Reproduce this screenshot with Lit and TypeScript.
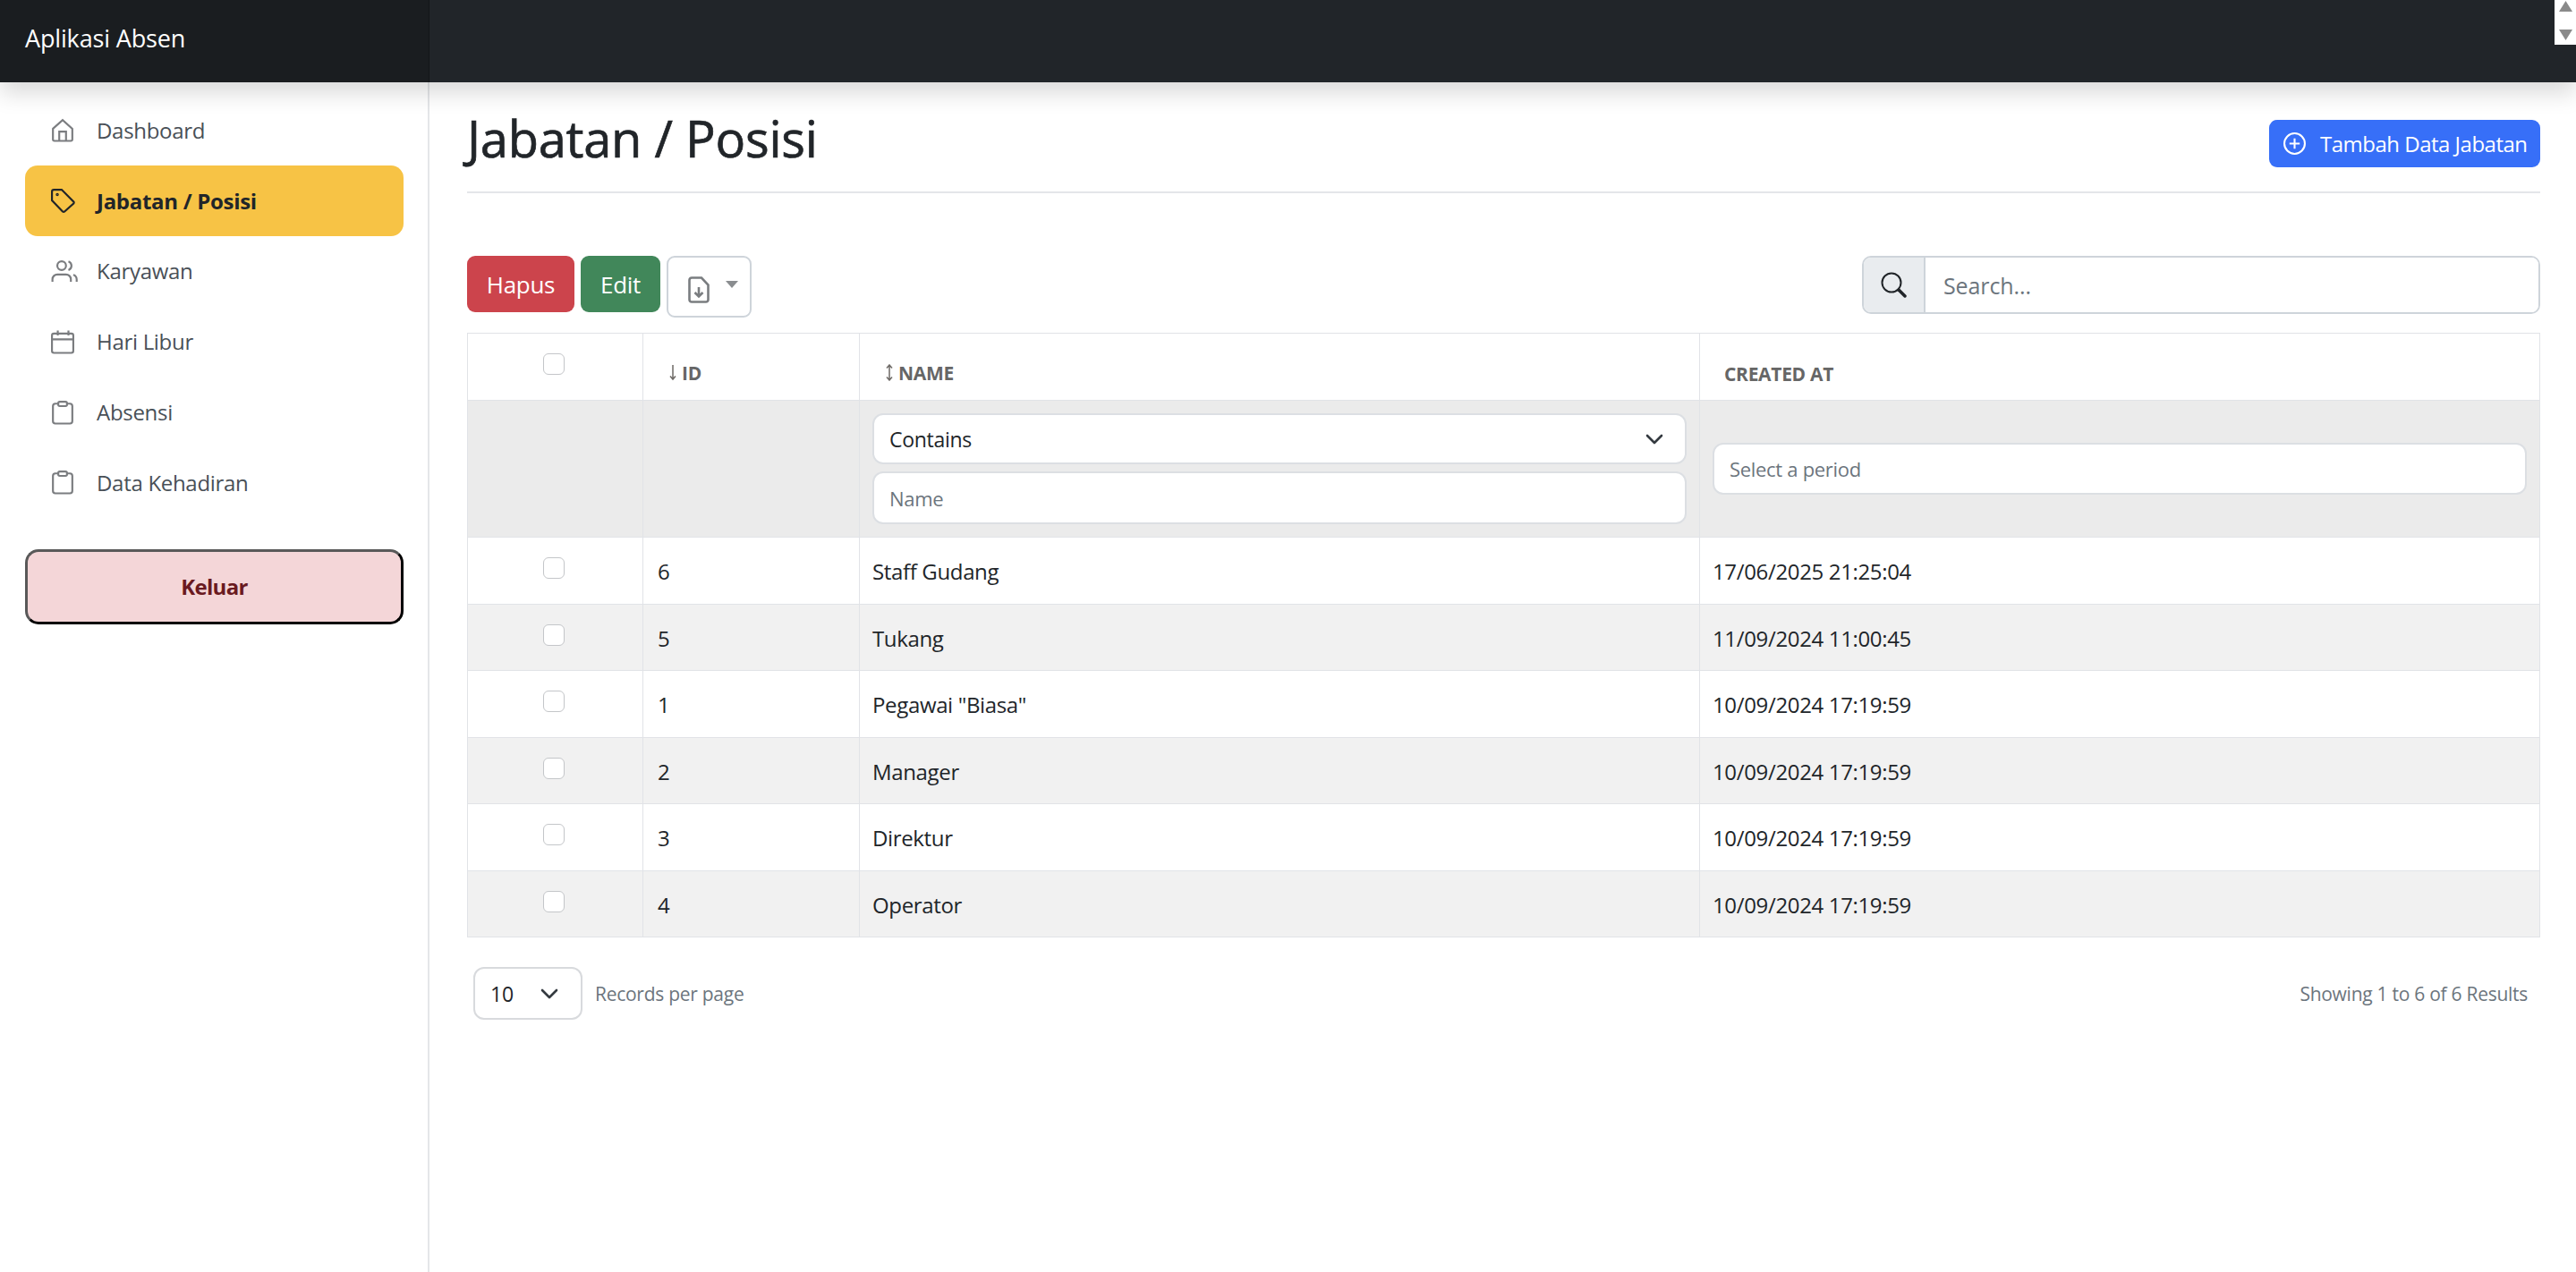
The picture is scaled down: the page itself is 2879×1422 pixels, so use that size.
import {html, css, svg, LitElement} from 'lit';
import {customElement} from 'lit/decorators.js';

const icons: Record<string, unknown> = {
  house: svg`<path d="M2 11 12 2l10 9v11a1.5 1.5 0 0 1-1.5 1.5h-17A1.5 1.5 0 0 1 2 22z"/><path d="M8.5 23.5V14h7v9.5"/>`,
  tag: svg`<path d="M1 3a2 2 0 0 1 2-2h8l12.5 12.5a1.5 1.5 0 0 1 0 1.5l-9.5 8.5a1.5 1.5 0 0 1-2 0L1 12z"/><circle cx="6.5" cy="6" r=".6"/>`,
  people: svg`<circle cx="11" cy="6.5" r="4.5"/><path d="M1.5 23v-2.5a5 5 0 0 1 5-5h9a5 5 0 0 1 5 5V23"/><path d="M18 2a4.8 4.8 0 0 1 0 9"/><path d="M23 16a5 5 0 0 1 3.5 4.5V23"/>`,
  calendar: svg`<rect x="1" y="3.5" width="22" height="20" rx="2"/><path d="M1 9.5h22M7 .5v5M18 .5v5"/>`,
  clipboard: svg`<rect x="2" y="3" width="20" height="20.5" rx="2.5"/><rect x="7.5" y="1" width="9" height="4.5" rx="1.5" fill="#fff"/>`,
};

const navItems = [
  {label: 'Dashboard', icon: 'house', active: false},
  {label: 'Jabatan / Posisi', icon: 'tag', active: true},
  {label: 'Karyawan', icon: 'people', active: false},
  {label: 'Hari Libur', icon: 'calendar', active: false},
  {label: 'Absensi', icon: 'clipboard', active: false},
  {label: 'Data Kehadiran', icon: 'clipboard', active: false},
];

const rows = [
  {id: 6, name: 'Staff Gudang', created: '17/06/2025 21:25:04'},
  {id: 5, name: 'Tukang', created: '11/09/2024 11:00:45'},
  {id: 1, name: 'Pegawai "Biasa"', created: '10/09/2024 17:19:59'},
  {id: 2, name: 'Manager', created: '10/09/2024 17:19:59'},
  {id: 3, name: 'Direktur', created: '10/09/2024 17:19:59'},
  {id: 4, name: 'Operator', created: '10/09/2024 17:19:59'},
];

const chevron = html`<svg class="chevron" viewBox="0 0 20 12" fill="none" stroke="#343a40" stroke-width="2.6" stroke-linecap="round" stroke-linejoin="round"><path d="M2 2l8 8 8-8"/></svg>`;

@customElement('app-root')
export class AppRoot extends LitElement {
  static styles = css`
    :host {
      display: block;
      min-height: 1422px;
      font-family: 'Open Sans', 'Liberation Sans', sans-serif;
      color: #212529;
      background: #fff;
      position: relative;
      overflow: hidden;
    }
    * {
      box-sizing: border-box;
    }
    .navbar {
      display: flex;
      height: 92px;
      background: #212529;
      box-shadow: 0 12px 24px rgba(0, 0, 0, 0.15);
      position: relative;
      z-index: 2;
    }
    .brand {
      width: 480px;
      padding: 25px 0 0 28px;
      background: #1a1d20;
      box-shadow: inset -1px 0 0 rgba(0, 0, 0, 0.25);
      color: #fff;
      font-size: 27px;
      letter-spacing: -0.15px;
      line-height: 36px;
    }
    .scroll-stub {
      position: absolute;
      top: 0;
      right: 0;
      z-index: 3;
      width: 24px;
      height: 50px;
      background: #fff;
      display: flex;
      flex-direction: column;
      align-items: center;
      gap: 20px;
      padding-top: 1px;
    }
    .scroll-stub svg {
      width: 15px;
      height: 12px;
      fill: #8a8a8a;
    }
    .layout {
      display: flex;
      min-height: 1330px;
    }
    .sidebar {
      width: 480px;
      flex: none;
      padding: 14px 27px 0 28px;
      border-right: 2px solid #e4e6e9;
    }
    .nav-item {
      display: flex;
      align-items: center;
      height: 78.8px;
      padding-left: 29px;
      border-radius: 14px;
      color: #495057;
      font-size: 24px;
      letter-spacing: -0.3px;
    }
    .nav-item.active {
      background: #f7c345;
      color: #212529;
      font-weight: 700;
    }
    .nav-icon {
      width: 26px;
      height: 26px;
      flex: none;
      margin-right: 25px;
      fill: none;
      stroke: #7b7d80;
      stroke-width: 2;
      overflow: visible;
    }
    .active .nav-icon {
      stroke: #212529;
    }
    .logout {
      display: block;
      width: 100%;
      height: 84px;
      margin-top: 35px;
      border: 3px solid #000;
      border-color: #595959 #000 #000 #595959;
      border-radius: 15px;
      background: #f4d6d8;
      color: #6a1a21;
      font: 700 24px 'Open Sans', sans-serif;
      letter-spacing: -0.7px;
    }
    .content {
      flex: 1;
      min-width: 0;
      padding: 0 40px 0 42px;
    }
    .page-head {
      display: flex;
      justify-content: space-between;
      align-items: center;
      height: 124px;
      padding-top: 14px;
      border-bottom: 2px solid #e4e6e9;
    }
    h1 {
      margin: 0 0 12px;
      font-size: 56px;
      font-weight: 500;
      -webkit-text-stroke: 0.7px #212529;
      letter-spacing: -0.25px;
      line-height: 72px;
    }
    .btn-add {
      display: flex;
      align-items: center;
      gap: 16px;
      width: 303px;
      height: 53px;
      padding-left: 16px;
      border-radius: 9px;
      background: #376ff8;
      color: #fff;
      font-size: 24px;
      letter-spacing: -0.5px;
    }
    .btn-add svg {
      width: 25px;
      height: 25px;
      flex: none;
      fill: none;
      stroke: #fff;
      stroke-width: 2;
    }
    .toolbar {
      display: flex;
      align-items: flex-start;
      gap: 7px;
      margin-top: 70px;
    }
    .btn {
      display: flex;
      align-items: center;
      justify-content: center;
      height: 63px;
      border-radius: 9px;
      color: #fff;
      font-size: 26px;
      letter-spacing: -0.3px;
    }
    .btn-delete {
      width: 120px;
      background: #cc444c;
    }
    .btn-edit {
      width: 89px;
      background: #41875a;
    }
    .btn-export {
      width: 95px;
      height: 69px;
      gap: 18px;
      padding: 0 0 0 9px;
      border: 2px solid #ced4da;
      background: #fff;
    }
    .btn-export svg.file {
      width: 24px;
      height: 30px;
      margin-top: 6px;
      fill: none;
      stroke: #7a7d80;
      stroke-width: 2.6;
    }
    .btn-export svg.caret {
      width: 14px;
      height: 8px;
      margin-top: -6px;
      fill: #8a8d90;
    }
    .search {
      display: flex;
      width: 758px;
      height: 65px;
      margin-left: auto;
      border: 2px solid #ced4da;
      border-radius: 10px;
      overflow: hidden;
    }
    .search-addon {
      display: flex;
      align-items: center;
      justify-content: center;
      width: 69px;
      flex: none;
      background: #e9ecef;
      border-right: 2px solid #ced4da;
    }
    .search-addon svg {
      width: 29px;
      height: 29px;
      fill: none;
      stroke: #212529;
      stroke-width: 2;
    }
    .search input {
      flex: 1;
      min-width: 0;
      padding: 0 20px;
      border: 0;
      outline: 0;
      font: 400 25px 'Open Sans', sans-serif;
      letter-spacing: -0.1px;
    }
    input::placeholder {
      color: #6c757d;
      opacity: 1;
    }
    table {
      width: 2317px;
      margin-top: 17px;
      border-collapse: collapse;
      table-layout: fixed;
      font-size: 24px;
      letter-spacing: -0.35px;
    }
    col.c-check {
      width: 196px;
    }
    col.c-id {
      width: 242px;
    }
    col.c-name {
      width: 939px;
    }
    th,
    td {
      border: 1.5px solid #e1e3e7;
      padding: 0 16px;
      text-align: left;
    }
    th {
      height: 75px;
      padding-top: 15px;
      color: #666;
      font-size: 21px;
      font-weight: 700;
      letter-spacing: -0.3px;
      text-transform: uppercase;
    }
    th .sort {
      display: inline-flex;
      align-items: center;
      gap: 5px;
      padding-left: 12px;
    }
    th.plain {
      padding-left: 27px;
    }
    th svg {
      width: 10px;
      height: 19px;
      fill: none;
      stroke: #6e6a66;
      stroke-width: 1.5;
    }
    .filters td {
      height: 153px;
      padding: 0 14px;
      background: #ebebeb;
    }
    .filter-field {
      display: flex;
      align-items: center;
      justify-content: space-between;
      width: 100%;
      height: 57px;
      padding: 0 24px 0 17px;
      border: 2px solid #dcdfe3;
      border-radius: 12px;
      background: #fff;
      color: #212529;
      font: 400 23px 'Open Sans', sans-serif;
      letter-spacing: -0.3px;
      outline: 0;
    }
    input.filter-field {
      display: block;
      height: 58px;
      font-size: 22px;
    }
    .filter-field + .filter-field {
      margin-top: 8px;
      height: 59px;
    }
    .chevron {
      width: 20px;
      height: 12px;
      flex: none;
    }
    tbody.data td {
      height: 74.5px;
      padding-top: 2px;
    }
    tbody.data td:nth-child(n + 3) {
      padding-left: 14px;
    }
    tbody.data tr:nth-child(even) td {
      background: #f1f1f1;
    }
    .check-cell {
      text-align: center;
      vertical-align: top;
    }
    th.check-cell {
      padding: 22px 20px 0 16px;
    }
    tbody.data td.check-cell {
      padding: 22px 20px 0 16px;
    }
    .check {
      display: block;
      width: 24px;
      height: 24px;
      margin: 0 auto;
      border: 1.5px solid #c4c6c9;
      border-radius: 6px;
      background: #fff;
    }
    .foot {
      display: flex;
      align-items: center;
      height: 59px;
      margin-top: 33px;
      padding: 0 14px 0 7px;
      color: #6c757d;
      font-size: 21px;
      letter-spacing: -0.27px;
    }
    .per-page {
      display: flex;
      align-items: center;
      justify-content: space-between;
      width: 122px;
      height: 59px;
      margin-right: 14px;
      padding: 0 25px 0 17px;
      border: 2px solid #d8dadd;
      border-radius: 12px;
      color: #212529;
      font-size: 23px;
    }
    .results {
      margin-left: auto;
    }
  `;

  renderNav() {
    return navItems.map(
      item => html`
        <div class="nav-item ${item.active ? 'active' : ''}">
          <svg class="nav-icon" viewBox="0 0 24 24">${icons[item.icon]}</svg>
          ${item.label}
        </div>
      `
    );
  }

  renderRows() {
    return rows.map(
      row => html`
        <tr>
          <td class="check-cell"><span class="check"></span></td>
          <td>${row.id}</td>
          <td>${row.name}</td>
          <td>${row.created}</td>
        </tr>
      `
    );
  }

  render() {
    return html`
      <div class="navbar">
        <div class="brand">Aplikasi Absen</div>
      </div>
      <div class="scroll-stub">
        <svg viewBox="0 0 15 12"><path d="M7.5 0 15 12H0z"/></svg>
        <svg viewBox="0 0 15 12"><path d="M0 0h15L7.5 12z"/></svg>
      </div>
      <div class="layout">
        <nav class="sidebar">
          ${this.renderNav()}
          <button class="logout">Keluar</button>
        </nav>
        <main class="content">
          <div class="page-head">
            <h1>Jabatan / Posisi</h1>
            <div class="btn-add">
              <svg viewBox="0 0 24 24"><circle cx="12" cy="12" r="11"/><path d="M12 6.5v11M6.5 12h11"/></svg>
              Tambah Data Jabatan
            </div>
          </div>
          <div class="toolbar">
            <div class="btn btn-delete">Hapus</div>
            <div class="btn btn-edit">Edit</div>
            <div class="btn btn-export">
              <svg class="file" viewBox="0 0 24 30">
                <path d="M4 1.5h11l7.5 8V26a2.5 2.5 0 0 1-2.5 2.5H4A2.5 2.5 0 0 1 1.5 26V4A2.5 2.5 0 0 1 4 1.5z"/>
                <path d="M12 12v10M7.5 18l4.5 4.5 4.5-4.5"/>
              </svg>
              <svg class="caret" viewBox="0 0 14 8"><path d="M0 0h14L7 8z"/></svg>
            </div>
            <div class="search">
              <div class="search-addon">
                <svg viewBox="0 0 29 29">
                  <circle cx="12" cy="12" r="10.5"/>
                  <path d="M20 20l7 7" stroke-width="3.5" stroke-linecap="round"/>
                </svg>
              </div>
              <input placeholder="Search..." />
            </div>
          </div>
          <table>
            <colgroup>
              <col class="c-check" />
              <col class="c-id" />
              <col class="c-name" />
              <col />
            </colgroup>
            <thead>
              <tr>
                <th class="check-cell"><span class="check"></span></th>
                <th>
                  <span class="sort">
                    <svg viewBox="0 0 10 19"><path d="M5 1v16M2 13.5 5 17l3-3.5"/></svg>
                    ID
                  </span>
                </th>
                <th>
                  <span class="sort">
                    <svg viewBox="0 0 10 19"><path d="M5 1v17M2 4.5 5 1l3 3.5M2 14.5 5 18l3-3.5"/></svg>
                    Name
                  </span>
                </th>
                <th class="plain">Created at</th>
              </tr>
            </thead>
            <tbody class="filters">
              <tr>
                <td></td>
                <td></td>
                <td>
                  <div class="filter-field">Contains ${chevron}</div>
                  <input class="filter-field" placeholder="Name" />
                </td>
                <td><input class="filter-field" placeholder="Select a period" /></td>
              </tr>
            </tbody>
            <tbody class="data">
              ${this.renderRows()}
            </tbody>
          </table>
          <div class="foot">
            <div class="per-page">10 ${chevron}</div>
            Records per page
            <span class="results">Showing 1 to 6 of 6 Results</span>
          </div>
        </main>
      </div>
    `;
  }
}
